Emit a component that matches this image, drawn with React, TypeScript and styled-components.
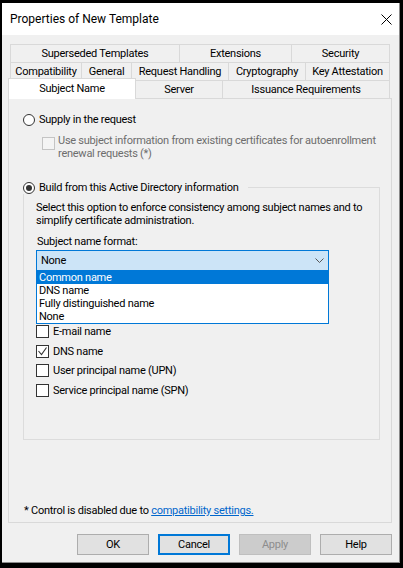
import React from 'react';
import styled, { createGlobalStyle, css } from 'styled-components';

const GlobalStyle = createGlobalStyle`
  html, body {
    margin: 0;
    padding: 0;
    background: #000;
  }
  body {
    font-family: Roboto, "Liberation Sans", Arial, sans-serif;
    font-size: 11px;
    letter-spacing: -0.25px;
    color: #000;
  }
  * {
    box-sizing: border-box;
  }
`;

const Window = styled.div`
  width: 398px;
  height: 560px;
  margin: 3px 0 0 2px;
  display: flex;
  flex-direction: column;
  background: #f0f0f0;
  border-right: 1px solid #8c8c8c;
  border-bottom: 1px solid #8c8c8c;
`;

const TitleBar = styled.div`
  flex: none;
  height: 32px;
  display: flex;
  align-items: center;
  padding-left: 8px;
  background: #fff;
`;

const Title = styled.span`
  font-size: 12px;
  letter-spacing: 0;
`;

const CloseButton = styled.button`
  margin-left: auto;
  width: 26px;
  height: 32px;
  padding: 0;
  border: 0;
  background: transparent;
  display: flex;
  align-items: center;
  justify-content: center;
`;

const Body = styled.div`
  flex: 1;
  display: flex;
  flex-direction: column;
  padding: 9px 7px 0 6px;
`;

const TabStrip = styled.div`
  padding: 0 2px;
`;

const TabRow = styled.div`
  display: flex;
  height: 18px;
`;

const Tab = styled.div<{ $w: number; $first?: boolean; $active?: boolean }>`
  flex: 0 0 ${(p) => p.$w}px;
  height: 18px;
  display: flex;
  align-items: center;
  justify-content: center;
  white-space: nowrap;
  background: #f0f0f0;
  border-top: 1px solid #d9d9d9;
  border-right: 1px solid #d9d9d9;
  border-left: ${(p) => (p.$first ? '1px solid #d9d9d9' : '0')};
  ${(p) =>
    p.$active &&
    css`
      position: relative;
      z-index: 1;
      flex-basis: ${p.$w + 2}px;
      height: 21px;
      margin: -2px 0 -1px -2px;
      padding-bottom: 2px;
      background: #fff;
      border-left: 1px solid #d9d9d9;
    `}
`;

const Panel = styled.div`
  height: 425px;
  display: flex;
  flex-direction: column;
  padding: 14px 0 5px 14px;
  border: 1px solid #d9d9d9;
`;

const OptionRow = styled.label`
  display: flex;
  align-items: center;
  gap: 4px;
  height: 13px;
  line-height: 13px;
  white-space: nowrap;
`;

const Radio = styled.span<{ $checked?: boolean }>`
  flex: none;
  width: 12px;
  height: 12px;
  border-radius: 50%;
  border: 1px solid #333;
  background: #fff;
  display: flex;
  align-items: center;
  justify-content: center;
  &::after {
    content: '';
    width: 6px;
    height: 6px;
    border-radius: 50%;
    background: ${(p) => (p.$checked ? '#333' : 'transparent')};
  }
`;

const Check = styled.span<{ $disabled?: boolean }>`
  flex: none;
  width: 13px;
  height: 13px;
  border: 1px solid ${(p) => (p.$disabled ? '#c4c4c4' : '#333')};
  background: ${(p) => (p.$disabled ? '#f4f4f4' : '#fff')};
  display: flex;
  align-items: center;
  justify-content: center;
`;

const SubOption = styled.div`
  display: flex;
  gap: 3px;
  margin: 8px 0 0 19px;
  color: #6d6d6d;
  line-height: 13px;
  ${Check} {
    margin-top: 3px;
  }
`;

const SubText = styled.div`
  max-width: 325px;
`;

const Group = styled.fieldset`
  width: 357px;
  margin: 21px 0 0;
  padding: 0;
  min-width: 0;
  border: 1px solid #dcdcdc;
`;

const Legend = styled.legend`
  display: flex;
  align-items: center;
  gap: 4px;
  height: 13px;
  line-height: 13px;
  margin-left: -1px;
  padding: 0 9px 0 0;
`;

const GroupBody = styled.div`
  padding: 7px 0 42.5px 12px;
  line-height: 13px;
`;

const Hint = styled.div`
  width: 340px;
`;

const FieldLabel = styled.div`
  margin: 8px 0 0 1px;
`;

const Combo = styled.div`
  width: 293px;
  margin-top: 2px;
`;

const ComboField = styled.div`
  height: 21px;
  display: flex;
  align-items: center;
  padding: 0 4px;
  border: 1px solid #0078d7;
  background: #cce4f7;
`;

const Chevron = styled.svg`
  margin-left: auto;
`;

const DropList = styled.ul`
  margin: 0;
  padding: 0;
  list-style: none;
  background: #fff;
  border: 1px solid #0078d7;
  border-top: 0;
`;

const DropItem = styled.li<{ $selected?: boolean }>`
  height: 13px;
  line-height: 13px;
  padding-left: 2px;
  background: ${(p) => (p.$selected ? '#0078d7' : 'transparent')};
  color: ${(p) => (p.$selected ? '#fff' : '#000')};
`;

const CheckList = styled.div`
  display: flex;
  flex-direction: column;
  gap: 6.5px;
  margin-top: 1px;
`;

const Footer = styled.div`
  margin: auto 0 0 1px;
  line-height: 13px;
`;

const Link = styled.a`
  color: #0066cc;
  text-decoration: underline;
`;

const ButtonRow = styled.div`
  display: flex;
  justify-content: flex-end;
  gap: 9px;
  margin-top: 11px;
`;

const Button = styled.button<{ $default?: boolean }>`
  width: 72px;
  height: 21px;
  padding: 0;
  font: inherit;
  letter-spacing: inherit;
  color: #000;
  background: #e1e1e1;
  border: 1px solid #adadad;
  ${(p) =>
    p.$default &&
    css`
      border: 2px solid #0078d7;
    `}
  &:disabled {
    background: #cccccc;
    border-color: #bfbfbf;
    color: #8d8d8d;
  }
`;

const CheckMark = () => (
  <svg width="11" height="11" viewBox="0 0 11 11">
    <polyline points="1.5,5 4.5,8.5 9.5,1.5" fill="none" stroke="#333" strokeWidth="1.1" />
  </svg>
);

const tabRows = [
  [
    { label: 'Superseded Templates', w: 170 },
    { label: 'Extensions', w: 112 },
    { label: 'Security', w: 98 },
  ],
  [
    { label: 'Compatibility', w: 72 },
    { label: 'General', w: 50 },
    { label: 'Request Handling', w: 97 },
    { label: 'Cryptography', w: 77 },
    { label: 'Key Attestation', w: 84 },
  ],
  [
    { label: 'Subject Name', w: 126, active: true },
    { label: 'Server', w: 87 },
    { label: 'Issuance Requirements', w: 167 },
  ],
];

const formats = ['Common name', 'DNS name', 'Fully distinguished name', 'None'];

const altNames = [
  { label: 'E-mail name', checked: false },
  { label: 'DNS name', checked: true },
  { label: 'User principal name (UPN)', checked: false },
  { label: 'Service principal name (SPN)', checked: false },
];

export default function App() {
  return (
    <>
      <GlobalStyle />
      <Window>
        <TitleBar>
          <Title>Properties of New Template</Title>
          <CloseButton aria-label="Close">
            <svg width="11" height="11" viewBox="0 0 11 11">
              <path d="M0.5 0.5 L10.5 10.5 M10.5 0.5 L0.5 10.5" stroke="#000" strokeWidth="1" />
            </svg>
          </CloseButton>
        </TitleBar>
        <Body>
          <TabStrip>
            {tabRows.map((row, r) => (
              <TabRow key={r}>
                {row.map((t, i) => (
                  <Tab key={t.label} $w={t.w} $first={i === 0} $active={'active' in t && t.active}>
                    {t.label}
                  </Tab>
                ))}
              </TabRow>
            ))}
          </TabStrip>
          <Panel>
            <OptionRow>
              <Radio />
              Supply in the request
            </OptionRow>
            <SubOption>
              <Check $disabled />
              <SubText>
                Use subject information from existing certificates for autoenrollment renewal requests (*)
              </SubText>
            </SubOption>
            <Group>
              <Legend>
                <Radio $checked />
                Build from this Active Directory information
              </Legend>
              <GroupBody>
                <Hint>
                  Select this option to enforce consistency among subject names and to simplify certificate
                  administration.
                </Hint>
                <FieldLabel>Subject name format:</FieldLabel>
                <Combo>
                  <ComboField>
                    None
                    <Chevron width="9" height="5" viewBox="0 0 9 5">
                      <polyline points="0.5,0.5 4.5,4.5 8.5,0.5" fill="none" stroke="#555" strokeWidth="1" />
                    </Chevron>
                  </ComboField>
                  <DropList>
                    {formats.map((f, i) => (
                      <DropItem key={f} $selected={i === 0}>
                        {f}
                      </DropItem>
                    ))}
                  </DropList>
                </Combo>
                <CheckList>
                  {altNames.map((n) => (
                    <OptionRow key={n.label}>
                      <Check>{n.checked && <CheckMark />}</Check>
                      {n.label}
                    </OptionRow>
                  ))}
                </CheckList>
              </GroupBody>
            </Group>
            <Footer>
              * Control is disabled due to <Link href="#">compatibility settings.</Link>
            </Footer>
          </Panel>
          <ButtonRow>
            <Button>OK</Button>
            <Button $default>Cancel</Button>
            <Button disabled>Apply</Button>
            <Button>Help</Button>
          </ButtonRow>
        </Body>
      </Window>
    </>
  );
}
